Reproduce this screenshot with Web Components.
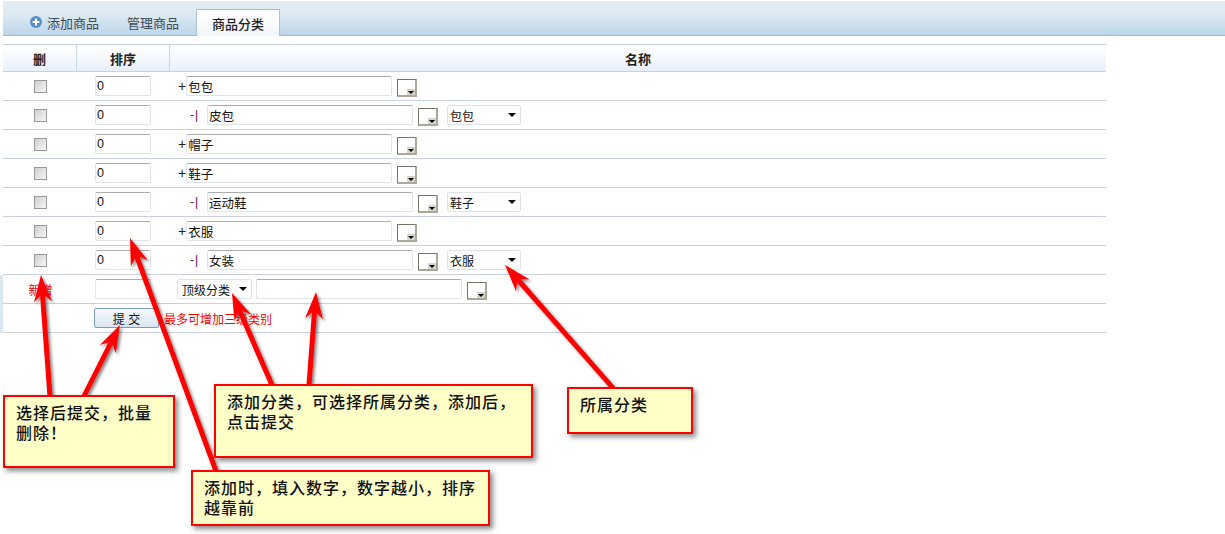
<!DOCTYPE html>
<html lang="zh">
<head>
<meta charset="utf-8">
<title>商品分类</title>
<style>
  html, body { margin: 0; background: #fff; }
  body {
    position: relative;
    width: 1225px;
    height: 534px;
    overflow: hidden;
    padding-top: 1px;
    box-sizing: border-box;
    font: 12px "Liberation Sans", "Noto Sans CJK SC", sans-serif;
    color: #222;
  }
</style>
</head>
<body>
  <tab-bar>
    <tab-item icon>添加商品</tab-item>
    <tab-item>管理商品</tab-item>
    <tab-item active>商品分类</tab-item>
  </tab-bar>

  <cat-table>
    <cat-row>
      <cat-field w="56">0</cat-field>
      <span slot="name" style="font-size:14px">+</span><cat-field slot="name" w="206">包包</cat-field><color-pick slot="name"></color-pick>
    </cat-row>
    <cat-row sub>
      <cat-field w="56">0</cat-field>
      <tree-mark slot="name"></tree-mark><cat-field slot="name" w="206">皮包</cat-field><color-pick slot="name"></color-pick><cat-select slot="name" w="74">包包</cat-select>
    </cat-row>
    <cat-row>
      <cat-field w="56">0</cat-field>
      <span slot="name" style="font-size:14px">+</span><cat-field slot="name" w="206">帽子</cat-field><color-pick slot="name"></color-pick>
    </cat-row>
    <cat-row>
      <cat-field w="56">0</cat-field>
      <span slot="name" style="font-size:14px">+</span><cat-field slot="name" w="206">鞋子</cat-field><color-pick slot="name"></color-pick>
    </cat-row>
    <cat-row sub>
      <cat-field w="56">0</cat-field>
      <tree-mark slot="name"></tree-mark><cat-field slot="name" w="206">运动鞋</cat-field><color-pick slot="name"></color-pick><cat-select slot="name" w="74">鞋子</cat-select>
    </cat-row>
    <cat-row>
      <cat-field w="56">0</cat-field>
      <span slot="name" style="font-size:14px">+</span><cat-field slot="name" w="206">衣服</cat-field><color-pick slot="name"></color-pick>
    </cat-row>
    <cat-row sub>
      <cat-field w="56">0</cat-field>
      <tree-mark slot="name"></tree-mark><cat-field slot="name" w="206">女装</cat-field><color-pick slot="name"></color-pick><cat-select slot="name" w="74">衣服</cat-select>
    </cat-row>
    <cat-row new>
      <span slot="del">新增</span>
      <cat-field w="56"></cat-field>
      <cat-select slot="name" w="75" short>顶级分类</cat-select><cat-field slot="name" w="206"></cat-field><color-pick slot="name"></color-pick>
    </cat-row>
    <cat-row new nocheck>
      <submit-button>提 交</submit-button>
      <span slot="name" style="color:#f00;margin-left:-14px">最多可增加三级类别</span>
    </cat-row>
  </cat-table>

  <call-arrows></call-arrows>

  <note-box x="3" y="395" w="172" h="73">选择后提交，批量<br>删除！</note-box>
  <note-box x="214" y="384" w="319" h="74">添加分类，可选择所属分类，添加后，<br>点击提交</note-box>
  <note-box x="191" y="470" w="299" h="56">添加时，填入数字，数字越小，排序<br>越靠前</note-box>
  <note-box x="567" y="387" w="126" h="47">所属分类</note-box>

<script>
class TabBar extends HTMLElement {
  constructor() {
    super();
    this.attachShadow({ mode: "open" });
    this.shadowRoot.innerHTML = /*html*/ `
      <style>
        :host {
          display: flex;
          align-items: flex-end;
          height: 35px;
          margin-left: 3px;
          padding-left: 11px;
          box-sizing: border-box;
          background: linear-gradient(#e3edf3, #dde9f1 40%, #bdd6ea);
          border-bottom: 1px solid #a2bdd2;
        }
      </style>
      <slot></slot>
    `;
  }
}
customElements.define('tab-bar', TabBar);

class TabItem extends HTMLElement {
  constructor() {
    super();
    this.attachShadow({ mode: "open" });
  }
  connectedCallback() {
    const icon = this.hasAttribute('icon') ? /*html*/ `
      <svg width="12" height="12" viewBox="0 0 12 12">
        <circle cx="6" cy="6" r="6" fill="#5b8ec4"/>
        <path d="M6 2.6v6.8M2.6 6h6.8" stroke="#fff" stroke-width="2"/>
      </svg>` : '';
    this.shadowRoot.innerHTML = /*html*/ `
      <style>
        :host {
          display: flex;
          align-items: center;
          gap: 5px;
          height: 26px;
          padding: 0 16px;
          margin-bottom: -1px;
          padding-bottom: 1px;
          font-size: 13px;
          color: #3c4a55;
        }
        :host([icon]) { padding-right: 12px; }
        :host([active]) {
          height: 26px;
          margin-left: 1px;
          padding: 0 15px 0;
          color: #222;
          background: linear-gradient(#fff, #f3f6f9);
          border: 1px solid #a9c3d6;
          border-bottom: 0;
          font-weight: 500;
        }
        svg { flex: none; }
      </style>
      ${icon}<slot></slot>
    `;
  }
}
customElements.define('tab-item', TabItem);

class CatTable extends HTMLElement {
  constructor() {
    super();
    this.attachShadow({ mode: "open" });
    this.shadowRoot.innerHTML = /*html*/ `
      <style>
        :host {
          display: block;
          width: 1103px;
          margin: 8px 0 0 3px;
        }
        .head {
          display: grid;
          grid-template-columns: 74px 93px 1fr;
          height: 26px;
          border-top: 1px solid #c8d0e2;
          border-bottom: 1px solid #c8d0e2;
          background: linear-gradient(#fff, #f6f9fd 45%, #e7f0fb);
          font-size: 13px;
          font-weight: 700;
          color: #222;
        }
        .head div {
          display: flex;
          align-items: center;
          justify-content: center;
          border-right: 1px solid #c9d8e6;
        }
        .head div:last-child { border-right: 0; }
      </style>
      <div class="head"><div>删</div><div>排序</div><div>名称</div></div>
      <slot></slot>
    `;
  }
}
customElements.define('cat-table', CatTable);

class CatRow extends HTMLElement {
  constructor() {
    super();
    this.attachShadow({ mode: "open" });
  }
  connectedCallback() {
    const check = this.hasAttribute('new') ? '' : '<i class="check"></i>';
    this.shadowRoot.innerHTML = /*html*/ `
      <style>
        :host {
          display: grid;
          grid-template-columns: 74px 93px 1fr;
          height: 29px;
          box-sizing: border-box;
          align-items: center;
          border-bottom: 1px solid #c8d0e2;
        }
        :host([new]) { box-shadow: -3px 0 0 #d9e8f3; color: #f00; }
        .del { display: flex; justify-content: center; color: #e00; padding-left: 1px; }
        .check {
          width: 11px;
          height: 11px;
          border: 1px solid #999;
          background: linear-gradient(135deg, #cfcfcf, #f6f6f6);
        }
        .order { padding-left: 18px; display: flex; color: #222; }
        :host([nocheck]) .order { padding-left: 17px; }
        .name { display: flex; align-items: center; padding-left: 8px; color: #222; }
        :host([sub]) .name { padding-left: 20px; }
        ::slotted(color-pick) { margin-left: 5px; }
      </style>
      <div class="del">${check}<slot name="del"></slot></div>
      <div class="order"><slot></slot></div>
      <div class="name"><slot name="name"></slot></div>
    `;
  }
}
customElements.define('cat-row', CatRow);

class CatField extends HTMLElement {
  constructor() {
    super();
    this.attachShadow({ mode: "open" });
  }
  connectedCallback() {
    const w = this.getAttribute('w') || 100;
    this.shadowRoot.innerHTML = /*html*/ `
      <style>
        :host {
          display: flex;
          align-items: center;
          flex: none;
          width: ${w}px;
          height: 20px;
          box-sizing: border-box;
          padding-left: 1px;
          border: 1px solid #e0e3ec;
          border-top-color: #acacac;
          border-radius: 2px;
          background: #fff;
          color: #111;
          font-size: 12.5px;
        }
      </style>
      <slot></slot>
    `;
  }
}
customElements.define('cat-field', CatField);

class CatSelect extends HTMLElement {
  constructor() {
    super();
    this.attachShadow({ mode: "open" });
  }
  connectedCallback() {
    this.shadowRoot.innerHTML = /*html*/ `
      <style>
        :host {
          display: flex;
          align-items: center;
          justify-content: space-between;
          flex: none;
          width: ${this.getAttribute('w')}px;
          height: 20px;
          box-sizing: border-box;
          margin-left: 9px;
          padding: 0 4px 0 2px;
          border: 1px solid #dfe2ea;
          border-radius: 2px;
          color: #111;
        }
        :host([short]) { margin: 0 4px 0 -1px; padding-left: 4px; }
        i {
          width: 0;
          height: 0;
          border: 4px solid transparent;
          border-top: 4px solid #000;
          border-bottom: 0;
        }
      </style>
      <span><slot></slot></span><i></i>
    `;
  }
}
customElements.define('cat-select', CatSelect);

class ColorPick extends HTMLElement {
  constructor() {
    super();
    this.attachShadow({ mode: "open" });
    this.shadowRoot.innerHTML = /*html*/ `
      <style>
        :host {
          display: block;
          position: relative;
          flex: none;
          width: 20px;
          height: 18px;
          margin-top: 3px;
          box-sizing: border-box;
          background: #fff;
          border: 1px solid #aca899;
          border-top-color: #77756b;
          border-left-color: #77756b;
          border-right-width: 2px;
          border-bottom-width: 2px;
        }
        b {
          position: absolute;
          right: 0;
          bottom: 0;
          width: 8px;
          height: 6px;
          background: #d6d3c8;
        }
        b::after {
          content: "";
          position: absolute;
          left: 1px;
          top: 2px;
          border: 3px solid transparent;
          border-top: 3px solid #000;
          border-bottom: 0;
        }
      </style>
      <b></b>
    `;
  }
}
customElements.define('color-pick', ColorPick);

class TreeMark extends HTMLElement {
  constructor() {
    super();
    this.attachShadow({ mode: "open" });
    this.shadowRoot.innerHTML = /*html*/ `
      <style>
        :host { display: block; flex: none; width: 17px; color: #333; }
        b { font-weight: 400; color: #505; margin-left: 1px; }
      </style>
      -<b>|</b>
    `;
  }
}
customElements.define('tree-mark', TreeMark);

class SubmitButton extends HTMLElement {
  constructor() {
    super();
    this.attachShadow({ mode: "open" });
    this.shadowRoot.innerHTML = /*html*/ `
      <style>
        :host {
          display: flex;
          align-items: center;
          justify-content: center;
          width: 65px;
          height: 20px;
          box-sizing: border-box;
          border: 1px solid #7e9cb8;
          border-radius: 2px;
          background: linear-gradient(#f4f8fb, #d8e6f2);
          color: #111;
          font-size: 12px;
        }
      </style>
      <slot></slot>
    `;
  }
}
customElements.define('submit-button', SubmitButton);

class NoteBox extends HTMLElement {
  constructor() {
    super();
    this.attachShadow({ mode: "open" });
  }
  connectedCallback() {
    const a = n => this.getAttribute(n);
    this.shadowRoot.innerHTML = /*html*/ `
      <style>
        :host {
          position: absolute;
          left: ${a('x')}px;
          top: ${a('y')}px;
          width: ${a('w')}px;
          height: ${a('h')}px;
          box-sizing: border-box;
          padding: 7px 11px;
          border: 2px solid #f00;
          background: #ffffc8;
          box-shadow: 3px 3px 5px rgba(60, 60, 60, .6);
          font-size: 16px;
          line-height: 20px;
          font-weight: 500;
          letter-spacing: 1px;
          color: #111;
        }
      </style>
      <slot></slot>
    `;
  }
}
customElements.define('note-box', NoteBox);

class CallArrows extends HTMLElement {
  constructor() {
    super();
    this.attachShadow({ mode: "open" });
  }
  connectedCallback() {
    // start x, y, then the tip x, y
    const arrows = [
      [50, 396, 41, 275],
      [84, 396, 120, 325],
      [216, 471, 130, 238],
      [272, 385, 232, 293],
      [309, 385, 316, 292],
      [613, 388, 505, 265]
    ];
    const polys = arrows.map(([x1, y1, x2, y2]) => {
      const len = Math.hypot(x2 - x1, y2 - y1);
      const ux = (x2 - x1) / len, uy = (y2 - y1) / len;
      const nx = -uy, ny = ux;
      const at = (back, side) =>
        (x2 - ux * back + nx * side).toFixed(1) + ',' + (y2 - uy * back + ny * side).toFixed(1);
      return `<polygon points="${at(0, 0)} ${at(27, 9)} ${at(21, 2.5)} ${at(len, 2.5)} ${at(len, -2.5)} ${at(21, -2.5)} ${at(27, -9)}"/>`;
    }).join('');
    this.shadowRoot.innerHTML = /*html*/ `
      <style>
        :host { position: absolute; left: 0; top: 0; width: 1225px; height: 534px; pointer-events: none; }
        svg { display: block; }
      </style>
      <svg width="1225" height="534">
        <defs>
          <filter id="shade" x="-20%" y="-20%" width="140%" height="140%">
            <feDropShadow dx="2" dy="2" stdDeviation="1.5" flood-color="#333" flood-opacity=".6"/>
          </filter>
        </defs>
        <g fill="#f00" filter="url(#shade)">${polys}</g>
      </svg>
    `;
  }
}
customElements.define('call-arrows', CallArrows);
</script>
</body>
</html>
